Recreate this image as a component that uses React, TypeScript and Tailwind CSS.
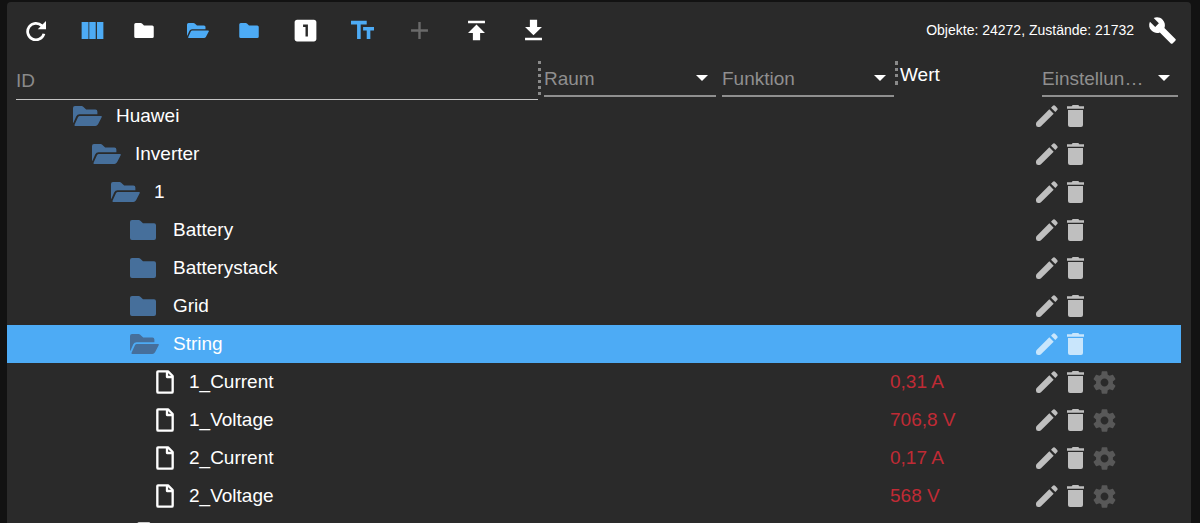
import React from "react";
import clsx from "clsx";

interface IconProps {
  d: string;
  className?: string;
}

const Icon: React.FC<IconProps> = ({ d, className = "size-[29px]" }) => (
  <svg viewBox="0 0 24 24" fill="currentColor" className={className} aria-hidden="true">
    <path d={d} />
  </svg>
);

const icons = {
  columns: "M14.67 5v14H9.33V5h5.34zm1 14H21V5h-5.33v14zm-7 0V5H3v14h5.67z",
  one: "M19 3H5c-1.1 0-2 .9-2 2v14c0 1.1.9 2 2 2h14c1.1 0 2-.9 2-2V5c0-1.1-.9-2-2-2zm-5 14h-2V9h-2V7h4v10z",
  text: "M2.5 4v3h5v12h3V7h5V4h-13zm19 5h-9v3h3v7h3v-7h3V9z",
  add: "M19 13h-6v6h-2v-6H5v-2h6V5h2v6h6v2z",
  upload: "M5 4v2h14V4H5zm0 10h4v6h6v-6h4l-7-7-7 7z",
  download: "M19 9h-4V3H9v6H5l7 7 7-7zM5 18v2h14v-2H5z",
  build:
    "M22.7 19l-9.1-9.1c.9-2.3.4-5-1.5-6.9-2-2-5-2.4-7.4-1.3L9 6 6 9 1.6 4.7C.4 7.1.9 10.1 2.9 12.1c1.9 1.9 4.6 2.4 6.9 1.5l9.1 9.1c.4.4 1 .4 1.4 0l2.3-2.3c.5-.4.5-1.1.1-1.4z",
  settings:
    "M19.43 12.98c.04-.32.07-.64.07-.98s-.03-.66-.07-.98l2.11-1.65c.19-.15.24-.42.12-.64l-2-3.46c-.12-.22-.39-.3-.61-.22l-2.49 1c-.52-.4-1.08-.73-1.69-.98l-.38-2.65C14.46 2.18 14.25 2 14 2h-4c-.25 0-.46.18-.49.42l-.38 2.65c-.61.25-1.17.59-1.69.98l-2.49-1c-.23-.09-.49 0-.61.22l-2 3.46c-.13.22-.07.49.12.64l2.11 1.65c-.04.32-.07.65-.07.98s.03.66.07.98l-2.11 1.65c-.19.15-.24.42-.12.64l2 3.46c.12.22.39.3.61.22l2.49-1c.52.4 1.08.73 1.69.98l.38 2.65c.03.24.24.42.49.42h4c.25 0 .46-.18.49-.42l.38-2.65c.61-.25 1.17-.59 1.69-.98l2.49 1c.23.09.49 0 .61-.22l2-3.46c.12-.22.07-.49-.12-.64l-2.11-1.65zM12 15.5c-1.93 0-3.5-1.57-3.5-3.5s1.57-3.5 3.5-3.5 3.5 1.57 3.5 3.5-1.57 3.5-3.5 3.5z",
};

const Refresh: React.FC = () => (
  <svg viewBox="0 0 58 58" className="size-5" aria-hidden="true">
    <path
      d="M46 14A24 24 0 1 0 52 37"
      fill="none"
      stroke="currentColor"
      strokeWidth="8"
    />
    <path d="M58 0V24H34Z" fill="currentColor" />
  </svg>
);

const FolderClosed: React.FC<{ className?: string }> = ({ className }) => (
  <svg viewBox="0 0 78 60" fill="currentColor" className={className} aria-hidden="true">
    <path d="M6 0H26Q29 0 31 2L39 10H72Q78 10 78 16V54Q78 60 72 60H6Q0 60 0 54V6Q0 0 6 0Z" />
  </svg>
);

const FolderOpen: React.FC<{ className?: string }> = ({ className }) => (
  <svg viewBox="0 0 88 60" fill="currentColor" className={className} aria-hidden="true">
    <path d="M6 0H26Q29 0 31 2L40 10H68Q74 10 74 16V25H20Q13 25 10 31L1 51Q0 51 0 48V6Q0 0 6 0Z" />
    <path d="M21 30H85Q89 30 87 34L76 55Q73 60 68 60H7Q3 60 5 56L15 34Q17 30 21 30Z" />
  </svg>
);

const Document: React.FC = () => (
  <svg
    viewBox="0 0 54 72"
    fill="none"
    stroke="currentColor"
    strokeWidth="7"
    strokeLinejoin="round"
    className="h-6 w-[18px] text-white"
    aria-hidden="true"
  >
    <path d="M6 4H36L50 18V65Q50 68 47 68H7Q4 68 4 65V6Q4 4 6 4Z" />
    <path d="M33 4V21H50" />
  </svg>
);

const Pencil: React.FC = () => (
  <svg viewBox="0 0 66 66" fill="currentColor" className="size-[22px]" aria-hidden="true">
    <path d="M7 66Q0 66 0 59V56Q0 53 2 51L40 13L53 26L15 64Q13 66 10 66Z" />
    <path d="M45 8L50 3Q54-1 58 3L63 8Q67 12 63 16L58 21Z" />
  </svg>
);

const Trash: React.FC = () => (
  <svg viewBox="0 0 51 66" fill="currentColor" className="h-[22px] w-[17px]" aria-hidden="true">
    <path d="M0 4H14L17 0H34L37 4H51V11H0Z" />
    <path d="M3 15H48V60Q48 66 42 66H9Q3 66 3 60Z" />
  </svg>
);

interface ToolProps {
  label: string;
  className?: string;
  disabled?: boolean;
  children: React.ReactNode;
}

const Tool: React.FC<ToolProps> = ({ label, className, disabled, children }) => (
  <button
    type="button"
    aria-label={label}
    disabled={disabled}
    className={clsx("flex h-[57px] shrink-0 items-center", className)}
  >
    {children}
  </button>
);

const Toolbar: React.FC = () => (
  <div className="flex items-center">
    <Tool label="Aktualisieren" className="w-[57px] justify-center">
      <Refresh />
    </Tool>
    <Tool label="Spalten" className="w-[57px] justify-center text-[#4dabf5]">
      <Icon d={icons.columns} />
    </Tool>
    <Tool label="Alle zuklappen" className="w-[52px] pl-[13px]">
      <FolderClosed className="h-[15px] w-5" />
    </Tool>
    <Tool label="Alle aufklappen" className="w-[52px] pl-[14px] text-[#4dabf5]">
      <FolderOpen className="h-[15px] w-[22px]" />
    </Tool>
    <Tool label="Ebene zuklappen" className="w-[52px] pl-[14px] text-[#4dabf5]">
      <FolderClosed className="h-[15px] w-5" />
    </Tool>
    <Tool label="Ebene aufklappen" className="w-[57px] justify-center">
      <Icon d={icons.one} />
    </Tool>
    <Tool label="Namen anzeigen" className="w-[57px] justify-center text-[#4dabf5]">
      <Icon d={icons.text} />
    </Tool>
    <Tool label="Hinzufügen" className="w-[57px] justify-center text-[#6a6a6a]" disabled>
      <Icon d={icons.add} />
    </Tool>
    <Tool label="Hochladen" className="w-[57px] justify-center">
      <Icon d={icons.upload} />
    </Tool>
    <Tool label="Herunterladen" className="w-[57px] justify-center">
      <Icon d={icons.download} />
    </Tool>
    <span className="ml-auto pb-0.5 text-sm whitespace-nowrap">
      Objekte: 24272, Zustände: 21732
    </span>
    <Tool label="Einstellungen" className="w-[57px] justify-center">
      <Icon d={icons.build} />
    </Tool>
  </div>
);

const Filter: React.FC<{ label: string }> = ({ label }) => (
  <div className="relative">
    <select
      aria-label={label}
      className="block h-9 w-full appearance-none overflow-hidden border-b-2 border-[#8f8f8f] bg-transparent pt-0.5 pr-8 text-ellipsis whitespace-nowrap text-[#8f8f8f] outline-none"
    >
      <option>{label}</option>
    </select>
    <svg
      viewBox="0 0 12 6"
      fill="currentColor"
      className="pointer-events-none absolute top-3.5 right-2 h-1.5 w-3"
      aria-hidden="true"
    >
      <path d="M0 0H12L6 6Z" />
    </svg>
  </div>
);

interface Item {
  name: string;
  level: number;
  kind: "open" | "closed" | "state";
  value?: string;
  selected?: boolean;
}

const items: Item[] = [
  { name: "Huawei", level: 0, kind: "open" },
  { name: "Inverter", level: 1, kind: "open" },
  { name: "1", level: 2, kind: "open" },
  { name: "Battery", level: 3, kind: "closed" },
  { name: "Batterystack", level: 3, kind: "closed" },
  { name: "Grid", level: 3, kind: "closed" },
  { name: "String", level: 3, kind: "open", selected: true },
  { name: "1_Current", level: 4, kind: "state", value: "0,31 A" },
  { name: "1_Voltage", level: 4, kind: "state", value: "706,8 V" },
  { name: "2_Current", level: 4, kind: "state", value: "0,17 A" },
  { name: "2_Voltage", level: 4, kind: "state", value: "568 V" },
  { name: "", level: 3, kind: "state" },
];

const indents = ["pl-[66px]", "pl-[85px]", "pl-[104px]", "pl-[123px]", "pl-[142px]"];

const Row: React.FC<{ item: Item }> = ({ item }) => (
  <tr className={clsx("h-[38px]", item.selected && "bg-[#4dabf5]")}>
    <td className="p-0">
      <div className={clsx("flex items-center", indents[item.level])}>
        <span
          className={clsx(
            "flex shrink-0 text-[#466f9b]",
            item.kind === "state" ? "w-10 pl-[7px]" : "w-[43px]"
          )}
        >
          {item.kind === "open" && <FolderOpen className="h-5 w-[29px]" />}
          {item.kind === "closed" && <FolderClosed className="h-5 w-[26px]" />}
          {item.kind === "state" && <Document />}
        </span>
        {item.name}
      </div>
    </td>
    <td />
    <td />
    <td className="p-0 text-[#c02a35]">
      <div className="-ml-1">{item.value}</div>
    </td>
    <td className="p-0">
      <div
        className={clsx(
          "flex h-[38px] items-center",
          item.selected ? "text-[#c9e6fc]" : "text-[#bfbfbf]"
        )}
      >
        <button type="button" aria-label={`${item.name} bearbeiten`}>
          <Pencil />
        </button>
        <button type="button" aria-label={`${item.name} löschen`} className="ml-[9px]">
          <Trash />
        </button>
        {item.kind === "state" && (
          <button
            type="button"
            aria-label={`${item.name} konfigurieren`}
            className="ml-[7px] text-[#585858]"
          >
            <Icon d={icons.settings} className="size-[27px]" />
          </button>
        )}
      </div>
    </td>
  </tr>
);

const ObjectTable: React.FC = () => (
  <table className="w-full table-fixed border-collapse text-[19px] leading-6">
    <colgroup>
      <col />
      <col className="w-[178px]" />
      <col className="w-[178px]" />
      <col className="w-[142px]" />
      <col className="w-[145px]" />
    </colgroup>
    <thead>
      <tr className="text-left align-top">
        <th className="p-0 font-normal">
          <div className="h-[38px] pl-[9px]">
            <input
              type="text"
              aria-label="ID"
              placeholder="ID"
              className="block h-[41px] w-full border-b border-[#c4c4c4] bg-transparent pt-1 outline-none placeholder:text-[#8a8a8a]"
            />
          </div>
        </th>
        <th className="p-0 font-normal">
          <div className="flex pt-0.5">
            <div className="mr-[3px] h-[34px] border-l-[3px] border-dotted border-[#8a8a8a]" />
            <div className="h-9 w-[172px]">
              <Filter label="Raum" />
            </div>
          </div>
        </th>
        <th className="p-0 pl-1.5 font-normal">
          <div className="pt-0.5">
            <Filter label="Funktion" />
          </div>
        </th>
        <th className="p-0 font-normal">
          <div className="flex pt-0.5 pl-px">
            <div className="mr-0.5 h-6 border-l-[3px] border-dotted border-[#8a8a8a]" />
            <span className="pt-0.5">Wert</span>
          </div>
        </th>
        <th className="p-0 pr-[3px] pl-1.5 font-normal">
          <div className="pt-0.5">
            <Filter label="Einstellungen" />
          </div>
        </th>
      </tr>
    </thead>
    <tbody>
      {items.map((item, index) => (
        <Row key={index} item={item} />
      ))}
    </tbody>
  </table>
);

const App: React.FC = () => {
  return (
    <div className="h-screen overflow-hidden bg-[#121212] pt-0.5 pr-[9px] pl-[7px] font-['Liberation_Sans',Arial,sans-serif] text-white">
      <main className="h-full overflow-hidden rounded-t bg-[#2a2a2a]">
        <Toolbar />
        <div className="pr-[10px]">
          <ObjectTable />
        </div>
      </main>
    </div>
  );
};

export default App;
